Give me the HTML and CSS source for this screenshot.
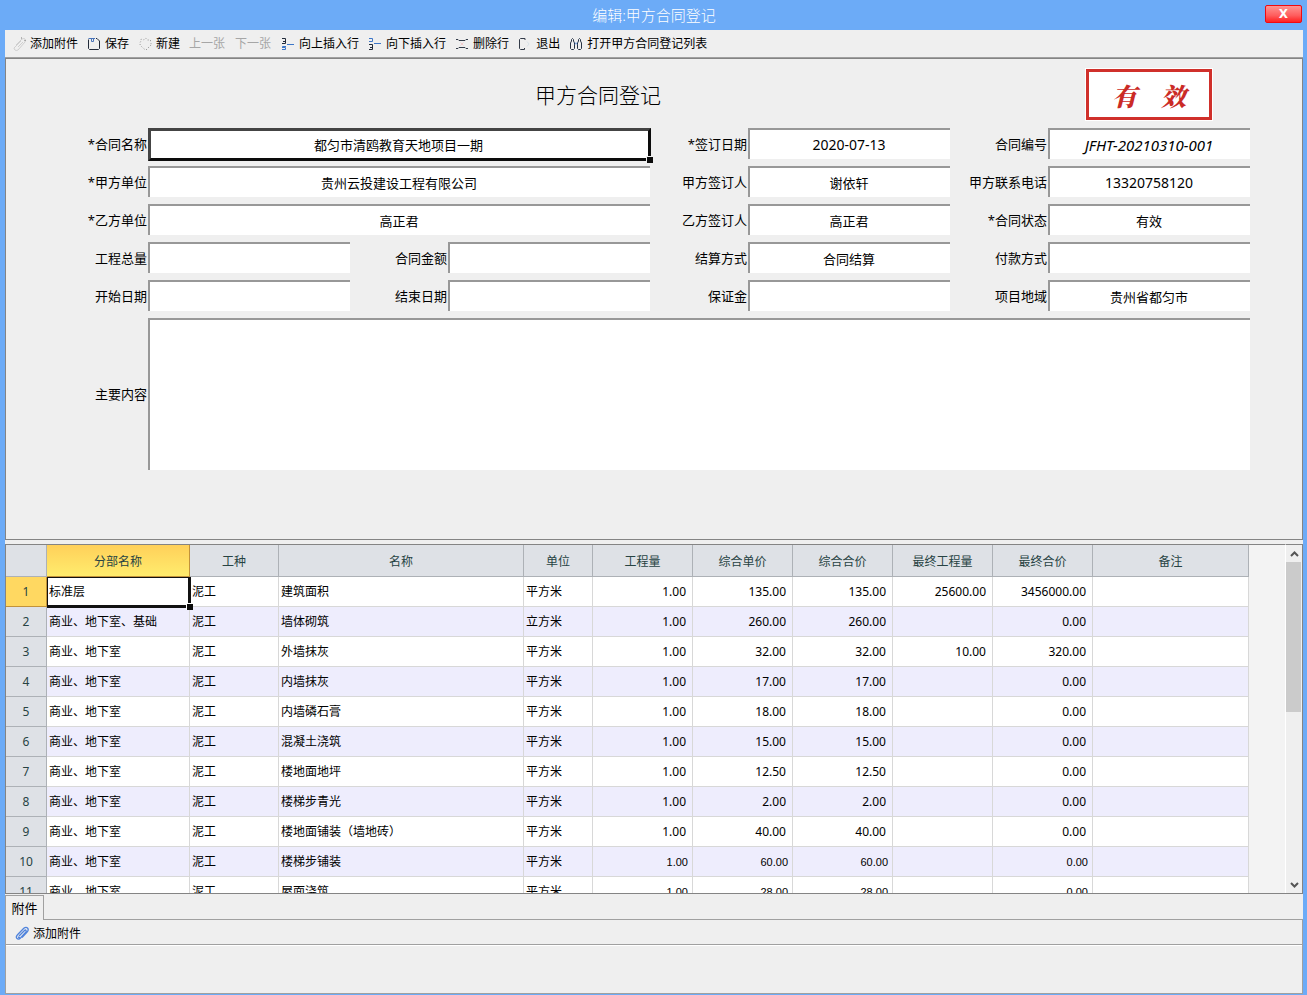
FILE: index.html
```html
<!DOCTYPE html>
<html lang="zh-CN">
<head>
<meta charset="utf-8">
<title>编辑:甲方合同登记</title>
<link rel="stylesheet" href="styles.css">
</head>
<body>
<div class="window">
  <header class="titlebar">
    <h1 class="titlebar-text">编辑:甲方合同登记</h1>
    <button class="close" type="button" aria-label="关闭">X</button>
  </header>

  <nav class="toolbar">
    <button type="button"><svg class="icon" viewBox="0 0 16 16"><path d="M4 9l6-6q2-1 3 0t0 3l-7 8q-2 1-3 0t-1-2l7-7M6 11l5-5" stroke="#cfcfcf"/><path d="M9 2h2M13 4v2" stroke="#777" stroke-dasharray="1 1"/></svg>添加附件</button>
    <button type="button"><svg class="icon" viewBox="0 0 16 16"><path d="M1.500 3.500V12.500L2.500 13.500H11.500L12.500 12.500V5L10 2.500H9" stroke="#222b3a"/><path d="M1.500 2.500H8M4.500 3V5.500H6.500V3" stroke="#4a74b8"/></svg>保存</button>
    <button type="button"><svg class="icon" viewBox="0 0 16 16"><path d="M7.500 2L9.500 4L12.500 4V7L14 8.500L11.500 10L9.500 13L7.500 14L5 12L3 10L1.500 7.500L3 5V3L5.500 4Z" stroke="#8f8f8f" stroke-dasharray="1 2"/></svg>新建</button>
    <button type="button" disabled>上一张</button>
    <button type="button" disabled>下一张</button>
    <button type="button"><svg class="icon" viewBox="0 0 16 16"><path d="M1 2.500H4.500V7.500H1M2 5.500H4.500" stroke="#222b3a"/><path d="M6 8.500H13M5 10.500H1.500V12M1.500 11.500H4.500V13.500H1" stroke="#3c76c8"/></svg>向上插入行</button>
    <button type="button"><svg class="icon" viewBox="0 0 16 16"><path d="M1 2.500H4.500V5.500H1M6 7.500H13" stroke="#3c76c8"/><path d="M1 8.500H4.500V13.500H1M2 11.500H4.500" stroke="#222b3a"/></svg>向下插入行</button>
    <button type="button"><svg class="icon" viewBox="0 0 16 16"><path d="M1 3.500H3L4 4.500H10L11 3.500H13M1 12.500H3L4 11.500H10L11 12.500H13" stroke="#333b48"/><path d="M5.500 6.500l3 3M8.500 6.500l-3 3" stroke="#f3cccc"/></svg>删除行</button>
    <button type="button"><svg class="icon" viewBox="0 0 16 16"><path d="M7 4V2.500H2.500L1.500 3.500V12.500L2.500 13.500H6.500V12" stroke="#333b48"/><path d="M9 5.500l2 2.500l-2 2.500" stroke="#d8e2e8"/></svg>退出</button>
    <button type="button"><svg class="icon" viewBox="0 0 16 16"><path d="M2.500 3.500L3.500 2.500L4.500 3.500V5L5.500 7V12.500L4.500 13.500H2.500L1.500 12.500V7L2.500 5ZM9.500 3.500L10.500 2.500L11.500 3.500V5L12.500 7V12.500L11.500 13.500H9.500L8.500 12.500V7L9.500 5Z" stroke="#263244"/><path d="M6 6.500L8 8.500M8 6.500L6 8.500" stroke="#5f91d8"/></svg>打开甲方合同登记列表</button>
  </nav>

  <form class="form-panel">
    <h2 class="form-title">甲方合同登记</h2>
    <div class="stamp"><span>有</span><span>效</span></div>

    <label for="f1">*合同名称</label><div class="wide selected"><input id="f1" value="都匀市清鸥教育天地项目一期"></div>
    <label for="f2">*签订日期</label><input id="f2" class="latin" value="2020-07-13">
    <label for="f3">合同编号</label><input id="f3" class="latin code" value="JFHT-20210310-001">

    <label for="f4">*甲方单位</label><input id="f4" class="wide" value="贵州云投建设工程有限公司">
    <label for="f5">甲方签订人</label><input id="f5" value="谢依轩">
    <label for="f6">甲方联系电话</label><input id="f6" class="latin" value="13320758120">

    <label for="f7">*乙方单位</label><input id="f7" class="wide" value="高正君">
    <label for="f8">乙方签订人</label><input id="f8" value="高正君">
    <label for="f9">*合同状态</label><input id="f9" value="有效">

    <label for="f10">工程总量</label><input id="f10">
    <label for="f11">合同金额</label><input id="f11">
    <label for="f12">结算方式</label><input id="f12" value="合同结算">
    <label for="f13">付款方式</label><input id="f13">

    <label for="f14">开始日期</label><input id="f14">
    <label for="f15">结束日期</label><input id="f15">
    <label for="f16">保证金</label><input id="f16">
    <label for="f17">项目地域</label><input id="f17" value="贵州省都匀市">

    <label for="f18">主要内容</label><textarea id="f18"></textarea>
  </form>

  <section class="grid-panel">
    <div class="grid-view">
      <table>
        <colgroup><col class="c-no"><col class="c-part"><col class="c-kind"><col class="c-name"><col class="c-unit"><col class="c-num"><col class="c-num"><col class="c-num"><col class="c-num"><col class="c-num"><col></colgroup>
        <thead><tr><th></th><th class="active">分部名称</th><th>工种</th><th>名称</th><th>单位</th><th>工程量</th><th>综合单价</th><th>综合合价</th><th>最终工程量</th><th>最终合价</th><th>备注</th></tr></thead>
        <tbody>
          <tr><th class="active">1</th><td class="current">标准层</td><td>泥工</td><td>建筑面积</td><td>平方米</td><td>1.00</td><td>135.00</td><td>135.00</td><td>25600.00</td><td>3456000.00</td><td></td></tr>
          <tr><th>2</th><td>商业、地下室、基础</td><td>泥工</td><td>墙体砌筑</td><td>立方米</td><td>1.00</td><td>260.00</td><td>260.00</td><td></td><td>0.00</td><td></td></tr>
          <tr><th>3</th><td>商业、地下室</td><td>泥工</td><td>外墙抹灰</td><td>平方米</td><td>1.00</td><td>32.00</td><td>32.00</td><td>10.00</td><td>320.00</td><td></td></tr>
          <tr><th>4</th><td>商业、地下室</td><td>泥工</td><td>内墙抹灰</td><td>平方米</td><td>1.00</td><td>17.00</td><td>17.00</td><td></td><td>0.00</td><td></td></tr>
          <tr><th>5</th><td>商业、地下室</td><td>泥工</td><td>内墙磷石膏</td><td>平方米</td><td>1.00</td><td>18.00</td><td>18.00</td><td></td><td>0.00</td><td></td></tr>
          <tr><th>6</th><td>商业、地下室</td><td>泥工</td><td>混凝土浇筑</td><td>平方米</td><td>1.00</td><td>15.00</td><td>15.00</td><td></td><td>0.00</td><td></td></tr>
          <tr><th>7</th><td>商业、地下室</td><td>泥工</td><td>楼地面地坪</td><td>平方米</td><td>1.00</td><td>12.50</td><td>12.50</td><td></td><td>0.00</td><td></td></tr>
          <tr><th>8</th><td>商业、地下室</td><td>泥工</td><td>楼梯步青光</td><td>平方米</td><td>1.00</td><td>2.00</td><td>2.00</td><td></td><td>0.00</td><td></td></tr>
          <tr><th>9</th><td>商业、地下室</td><td>泥工</td><td>楼地面铺装（墙地砖）</td><td>平方米</td><td>1.00</td><td>40.00</td><td>40.00</td><td></td><td>0.00</td><td></td></tr>
          <tr class="plain"><th>10</th><td>商业、地下室</td><td>泥工</td><td>楼梯步铺装</td><td>平方米</td><td>1.00</td><td>60.00</td><td>60.00</td><td></td><td>0.00</td><td></td></tr>
          <tr class="plain"><th>11</th><td>商业、地下室</td><td>泥工</td><td>屋面浇筑</td><td>平方米</td><td>1.00</td><td>28.00</td><td>28.00</td><td></td><td>0.00</td><td></td></tr>
        </tbody>
      </table>
    </div>
    <div class="scrollbar">
      <button type="button" aria-label="向上滚动"><svg viewBox="0 0 9 6"><path d="M1 5L4.500 1.500L8 5"/></svg></button>
      <div class="track"><div class="thumb"></div></div>
      <button type="button" aria-label="向下滚动"><svg viewBox="0 0 9 6"><path d="M1 1L4.500 4.500L8 1"/></svg></button>
    </div>
  </section>

  <section class="attachments">
    <div class="tabs"><button class="tab" type="button">附件</button></div>
    <div class="attach-box">
      <div class="attach-bar"><button type="button"><svg class="clip" viewBox="0 0 14 15"><path d="M4 10L9.500 4.500Q10.500 3.500 11 4.500Q11.500 5.500 10.500 6.500L5.500 12Q3.500 14 1.800 12.300Q.5 10.800 2.500 8.800L8.800 2.300Q11 .500 12.500 2Q14 3.800 12.300 5.800L7 11.500M3.500 10.500Q3 12 5 11.500" stroke="#4f83dc" stroke-width="1.300"/></svg>添加附件</button></div>
    </div>
  </section>
</div>
</body>
</html>
```
FILE: styles.css
```css
* { box-sizing: border-box; }
body {
  margin: 0;
  background: #6cabf7;
  color: #000;
  font: 12px/16px "Noto Sans", "Noto Sans CJK SC", sans-serif;
}
button, input, textarea { font: inherit; color: inherit; margin: 0; }
button { border: 0; padding: 0; background: none; display: flex; align-items: center; }
svg { display: block; fill: none; }
h1, h2 { margin: 0; font-weight: 300; }

.window {
  display: flex;
  flex-direction: column;
  height: 100vh;
  padding: 0 4px 1px 5px;
}

.titlebar {
  display: grid;
  grid-template-columns: 1fr auto 1fr;
  flex: none;
  height: 30px;
}
.titlebar-text {
  grid-column: 2;
  font-size: 15px;
  line-height: 30px;
  color: #fff;
}
.close {
  justify-self: end;
  justify-content: center;
  width: 37px;
  height: 18px;
  margin: 5px 1px 0 0;
  border: 1px solid #f00a10;
  border-radius: 2px;
  background: linear-gradient(#ff9492, #ff5c5c 60%, #ff2020);
  color: #fff;
  font: bold 12px/16px "DejaVu Sans", sans-serif;
}

.toolbar {
  display: flex;
  align-items: center;
  gap: 9px;
  flex: none;
  height: 28px;
  padding-left: 7px;
  background: #efefef;
  border-bottom: 1px solid #a0a0a0;
  white-space: nowrap;
}
.toolbar button { gap: 2px; }
.toolbar button:disabled { color: #a6a6a6; padding-right: 1px; }
.icon { width: 16px; height: 16px; }

.form-panel {
  display: grid;
  grid-template-columns: repeat(4, 98px minmax(0, 1fr));
  grid-template-rows: 55px repeat(5, 32px) 152px;
  row-gap: 6px;
  flex: none;
  padding: 8px 52px 69px 44px;
  border: 1px solid #848484;
  background: #efefef;
  font-size: 13px;
}
.form-title {
  grid-column: 2 / 8;
  align-self: center;
  text-align: center;
  font-size: 21px;
  line-height: 30px;
}
.stamp {
  grid-column: 8;
  place-self: center;
  display: flex;
  align-items: center;
  justify-content: center;
  gap: 24px;
  width: 126px;
  height: 51px;
  border: 3px solid #d0302b;
  outline: 1px solid #fff;
  background: #fff;
  color: #cb2b26;
  font: italic 900 25px/32px "Noto Serif CJK SC", "Noto Sans CJK SC", serif;
}
label { align-self: center; padding-right: 1px; text-align: right; white-space: nowrap; }
input, textarea {
  min-width: 0;
  width: 100%;
  border: 0 solid #989898;
  border-width: 2px 0 0 2px;
  border-radius: 0;
  background: #fff;
  text-align: center;
  outline: 0;
  padding: 0 2px 0 0;
}
input { height: 31px; }
textarea { grid-column: 2 / 9; resize: none; }
.wide { grid-column: span 3; }
.latin { font-size: 14px; }
.code { font-size: 15px; font-style: italic; }
.selected {
  position: relative;
  height: 33px;
  margin-right: -1px;
  border: 3px solid #0c0c0c;
  border-top-color: #444;
  border-left-color: #444;
}
.selected input { display: block; height: 27px; border: 0; }
.selected::after, .current::after {
  content: "";
  position: absolute;
  right: -5px;
  bottom: -5px;
  width: 6px;
  height: 6px;
  border: solid #efefef;
  border-width: 1px 0 0 1px;
  background: #0c0c0c;
}

.grid-panel {
  display: flex;
  flex: 1;
  min-height: 0;
  margin-top: 4px;
  border: 1px solid #848484;
  border-top: 0;
  background: #f3f3f3;
  box-shadow: 0 -4px #efefef;
}
.grid-view {
  flex: 1;
  min-width: 0;
  overflow: hidden;
  padding-right: 36px;
  border-top: 1px solid #848484;
}
table { width: 100%; table-layout: fixed; border-collapse: separate; border-spacing: 0; }
.c-no { width: 41px; }
.c-part { width: 143px; }
.c-kind { width: 89px; }
.c-name { width: 245px; }
.c-unit { width: 69px; }
.c-num { width: 100px; }
th {
  height: 30px;
  padding: 0;
  border: solid #adb1b6;
  border-width: 0 1px 1px 0;
  background: #dee1e6;
  color: #274343;
  font-weight: 400;
}
thead th { height: 32px; padding-top: 3px; }
thead th.active { background: linear-gradient(#ffd05a, #ffec6d); border-color: #c2923a; }
tbody th.active { background: #ffd861; border-color: #c2923a; }
td {
  height: 30px;
  padding: 0 2px;
  border: solid #d8d8d8;
  border-width: 0 1px 1px 0;
  background: #fff;
  white-space: nowrap;
}
tbody tr:nth-child(even) td { background: #eeedfd; }
td:nth-child(n+6) { text-align: right; padding-right: 6px; }
.plain td:nth-child(n+6) { font-family: "Liberation Sans", sans-serif; font-size: 11px; padding-right: 4px; }
.current { position: relative; }
.current::before {
  content: "";
  position: absolute;
  inset: 0 -2px -2px 0;
  border: 3px solid #111;
  border-width: 1px 3px 3px 1px;
}
.current::after { right: -4px; bottom: -4px; border-color: #fff; }

.scrollbar {
  display: flex;
  flex-direction: column;
  width: 17px;
  border-top: 1px solid #848484;
  border-left: 1px solid #fff;
  background: #efefef;
}
.scrollbar button { justify-content: center; height: 17px; }
.scrollbar svg { width: 9px; height: 6px; stroke: #555; stroke-width: 2; }
.track { flex: 1; padding-right: 1px; }
.thumb { height: 150px; background: #cbcbcb; }

.attachments { flex: none; background: #efefef; }
.tabs {
  display: flex;
  height: 26px;
  padding-top: 1px;
}
.tabs::after { content: ""; flex: 1; border-bottom: 1px solid #a0a0a0; }
.tab {
  justify-content: center;
  width: 39px;
  border: 1px solid #a0a0a0;
  border-bottom: 0;
  font-size: 13px;
}
.attach-box {
  height: 74px;
  border: 1px solid #a0a0a0;
  border-top: 0;
}
.attach-bar {
  display: flex;
  height: 25px;
  padding: 3px 0 0 9px;
  border-bottom: 1px solid #a0a0a0;
  box-shadow: 0 1px #fff;
}
.attach-bar button { gap: 4px; }
.clip { width: 14px; height: 15px; }
```
